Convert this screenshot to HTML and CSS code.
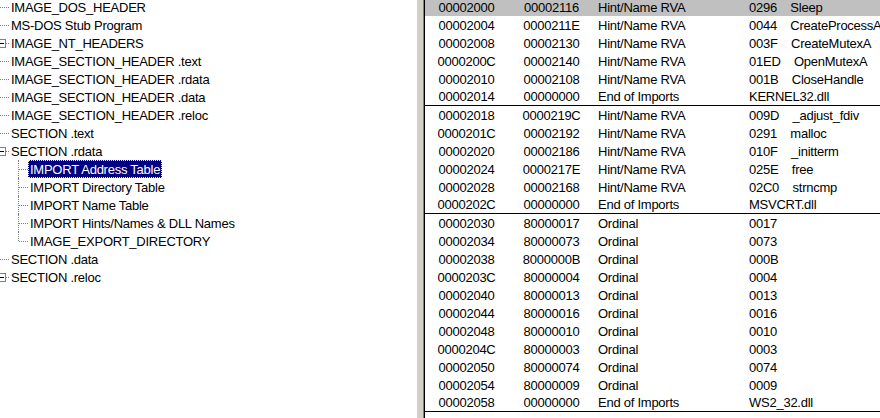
FILE: index.html
```html
<!DOCTYPE html>
<html>
<head>
<meta charset="utf-8">
<link rel="stylesheet" href="styles.css">
</head>
<body>
<div class="app">
  <div class="tree">
    <div class="node"><span class="twig"></span><span class="label">IMAGE_DOS_HEADER</span></div>
    <div class="node"><span class="twig"></span><span class="label">MS-DOS Stub Program</span></div>
    <div class="node"><span class="exp"></span><span class="twig short"></span><span class="label">IMAGE_NT_HEADERS</span></div>
    <div class="node"><span class="twig"></span><span class="label">IMAGE_SECTION_HEADER .text</span></div>
    <div class="node"><span class="twig"></span><span class="label">IMAGE_SECTION_HEADER .rdata</span></div>
    <div class="node"><span class="twig"></span><span class="label">IMAGE_SECTION_HEADER .data</span></div>
    <div class="node"><span class="twig"></span><span class="label">IMAGE_SECTION_HEADER .reloc</span></div>
    <div class="node"><span class="twig"></span><span class="label">SECTION .text</span></div>
    <div class="node"><span class="exp"></span><span class="twig short"></span><span class="label">SECTION .rdata</span></div>
    <div class="node child"><span class="elbow"></span><span class="label selected">IMPORT Address Table</span></div>
    <div class="node child"><span class="elbow"></span><span class="label">IMPORT Directory Table</span></div>
    <div class="node child"><span class="elbow"></span><span class="label">IMPORT Name Table</span></div>
    <div class="node child"><span class="elbow"></span><span class="label">IMPORT Hints/Names &amp; DLL Names</span></div>
    <div class="node child last"><span class="elbow"></span><span class="label">IMAGE_EXPORT_DIRECTORY</span></div>
    <div class="node"><span class="twig"></span><span class="label">SECTION .data</span></div>
    <div class="node"><span class="exp"></span><span class="twig short"></span><span class="label">SECTION .reloc</span></div>
  </div>
  <div class="splitter"></div>
  <div class="list">
    <div class="list-inner">
      <div class="row selrow"><span class="c1">00002000</span><span class="c2">00002116</span><span class="c3">Hint/Name RVA</span><span class="c4">0296    Sleep</span></div>
      <div class="row"><span class="c1">00002004</span><span class="c2">0000211E</span><span class="c3">Hint/Name RVA</span><span class="c4">0044    CreateProcessA</span></div>
      <div class="row"><span class="c1">00002008</span><span class="c2">00002130</span><span class="c3">Hint/Name RVA</span><span class="c4">003F    CreateMutexA</span></div>
      <div class="row"><span class="c1">0000200C</span><span class="c2">00002140</span><span class="c3">Hint/Name RVA</span><span class="c4">01ED    OpenMutexA</span></div>
      <div class="row"><span class="c1">00002010</span><span class="c2">00002108</span><span class="c3">Hint/Name RVA</span><span class="c4">001B    CloseHandle</span></div>
      <div class="row end"><span class="c1">00002014</span><span class="c2">00000000</span><span class="c3">End of Imports</span><span class="c4">KERNEL32.dll</span></div>
      <div class="row"><span class="c1">00002018</span><span class="c2">0000219C</span><span class="c3">Hint/Name RVA</span><span class="c4">009D    _adjust_fdiv</span></div>
      <div class="row"><span class="c1">0000201C</span><span class="c2">00002192</span><span class="c3">Hint/Name RVA</span><span class="c4">0291    malloc</span></div>
      <div class="row"><span class="c1">00002020</span><span class="c2">00002186</span><span class="c3">Hint/Name RVA</span><span class="c4">010F    _initterm</span></div>
      <div class="row"><span class="c1">00002024</span><span class="c2">0000217E</span><span class="c3">Hint/Name RVA</span><span class="c4">025E    free</span></div>
      <div class="row"><span class="c1">00002028</span><span class="c2">00002168</span><span class="c3">Hint/Name RVA</span><span class="c4">02C0    strncmp</span></div>
      <div class="row end"><span class="c1">0000202C</span><span class="c2">00000000</span><span class="c3">End of Imports</span><span class="c4">MSVCRT.dll</span></div>
      <div class="row"><span class="c1">00002030</span><span class="c2">80000017</span><span class="c3">Ordinal</span><span class="c4">0017</span></div>
      <div class="row"><span class="c1">00002034</span><span class="c2">80000073</span><span class="c3">Ordinal</span><span class="c4">0073</span></div>
      <div class="row"><span class="c1">00002038</span><span class="c2">8000000B</span><span class="c3">Ordinal</span><span class="c4">000B</span></div>
      <div class="row"><span class="c1">0000203C</span><span class="c2">80000004</span><span class="c3">Ordinal</span><span class="c4">0004</span></div>
      <div class="row"><span class="c1">00002040</span><span class="c2">80000013</span><span class="c3">Ordinal</span><span class="c4">0013</span></div>
      <div class="row"><span class="c1">00002044</span><span class="c2">80000016</span><span class="c3">Ordinal</span><span class="c4">0016</span></div>
      <div class="row"><span class="c1">00002048</span><span class="c2">80000010</span><span class="c3">Ordinal</span><span class="c4">0010</span></div>
      <div class="row"><span class="c1">0000204C</span><span class="c2">80000003</span><span class="c3">Ordinal</span><span class="c4">0003</span></div>
      <div class="row"><span class="c1">00002050</span><span class="c2">80000074</span><span class="c3">Ordinal</span><span class="c4">0074</span></div>
      <div class="row"><span class="c1">00002054</span><span class="c2">80000009</span><span class="c3">Ordinal</span><span class="c4">0009</span></div>
      <div class="row end"><span class="c1">00002058</span><span class="c2">00000000</span><span class="c3">End of Imports</span><span class="c4">WS2_32.dll</span></div>
    </div>
  </div>
</div>
</body>
</html>
```

FILE: styles.css
```css
html, body {
  margin: 0;
  padding: 0;
  background: #ffffff;
  overflow: hidden;
}

body {
  font-family: "Liberation Sans", Arial, sans-serif;
  font-size: 13px;
  letter-spacing: -0.25px;
  color: #000000;
}

.app {
  display: flex;
  width: 880px;
  height: 418px;
  overflow: hidden;
}

/* ---------- tree ---------- */
.tree {
  width: 417px;
  flex: none;
  background: #ffffff;
  margin-top: -2px;
  overflow: hidden;
}

.node {
  display: flex;
  align-items: center;
  height: 18px;
  white-space: nowrap;
}

.twig {
  flex: none;
  width: 9px;
  height: 0;
  border-top: 1px dotted #808080;
}

.twig.short {
  width: 3px;
}

.exp {
  flex: none;
  position: relative;
  width: 9px;
  height: 9px;
  margin-left: -3px;
  box-sizing: border-box;
  border: 1px solid #808080;
  background: #ffffff;
}

.exp::after {
  content: "";
  position: absolute;
  left: 1px;
  top: 3px;
  width: 5px;
  height: 1px;
  background: #000000;
}

.label {
  padding: 1px 1px 0 1px;
  border: 1px solid transparent;
  line-height: 15px;
}

.label.selected {
  background: #000080;
  color: #ffffff;
  border: 1px dotted #ffff80;
}

.node.child {
  padding-left: 18px;
}

.elbow {
  flex: none;
  position: relative;
  width: 10px;
  height: 18px;
}

.elbow::before {
  content: "";
  position: absolute;
  left: 0;
  top: 0;
  height: 18px;
  border-left: 1px dotted #808080;
}

.node.last .elbow::before {
  height: 9px;
}

.elbow::after {
  content: "";
  position: absolute;
  left: 1px;
  top: 9px;
  width: 9px;
  border-top: 1px dotted #808080;
}

/* ---------- splitter ---------- */
.splitter {
  flex: none;
  width: 6px;
  background: #d4d0c8;
}

/* ---------- list ---------- */
.list {
  flex: 1;
  border-left: 1px solid #808080;
  overflow: hidden;
}

.list-inner {
  height: 100%;
  border-left: 1px solid #000000;
  background: #ffffff;
  overflow: hidden;
}

.row {
  display: grid;
  grid-template-columns: 83px 87px 154px 1fr;
  align-items: center;
  height: 18px;
  box-sizing: border-box;
  white-space: pre;
}

.row:first-child {
  margin-top: -2px;
}

.row.selrow {
  background: #c0c0c0;
}

.row.end {
  border-bottom: 1px solid #000000;
}

.c1, .c2 {
  text-align: center;
}

.c3 {
  padding-left: 3px;
}

.c4 {
  overflow: hidden;
}
```
